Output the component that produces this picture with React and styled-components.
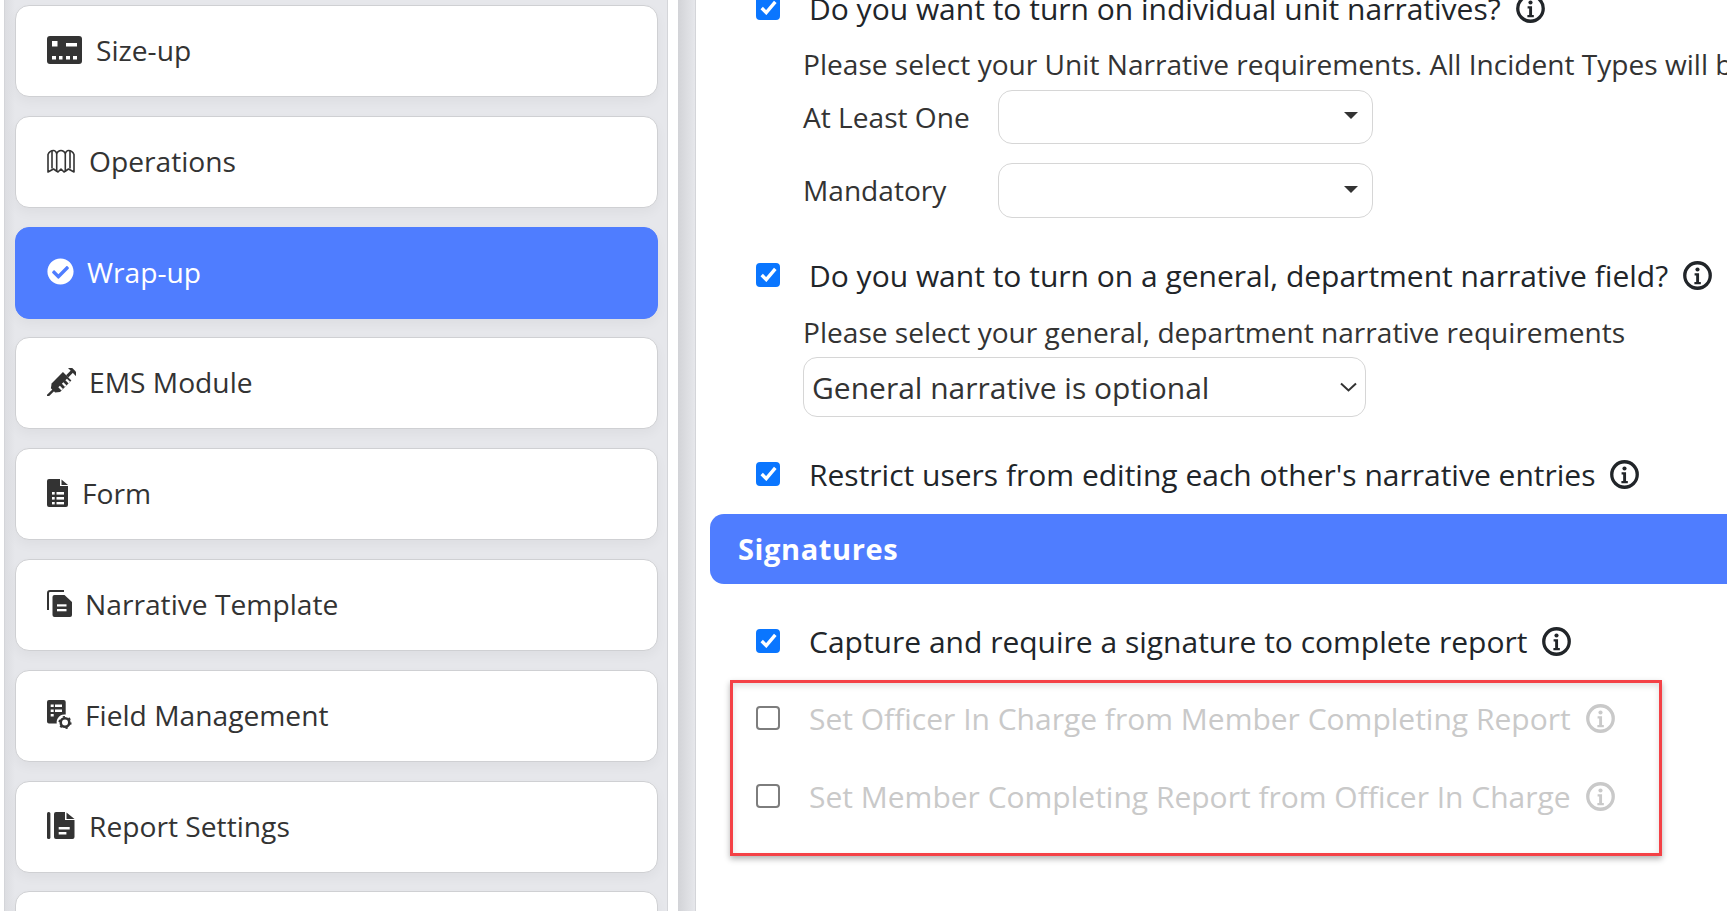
import React from "react";
import styled, { createGlobalStyle } from "styled-components";
import { FaCheckCircle } from "react-icons/fa";

const Global = createGlobalStyle`
  html, body { margin: 0; padding: 0; background: #fff; overflow: hidden; }
  body { font-family: "Open Sans", "Liberation Sans", sans-serif; color: #333; }
`;

const Page = styled.div`
  display: flex;
  width: 1727px;
  height: 911px;
  overflow: hidden;
  background: #fff;
  padding-left: 4px;
  box-sizing: border-box;
`;

const SidePanel = styled.aside`
  flex: 0 0 664px;
  box-sizing: border-box;
  border-left: 1px solid #d4d5d9;
  border-right: 1px solid #d4d5d9;
  background: linear-gradient(90deg, #dcdde1 0, #e6e7eb 10px);
  padding: 5px 9px 0 10px;
  display: flex;
  flex-direction: column;
  gap: 18.8px;
  overflow: hidden;
`;

const NavCard = styled.div`
  flex: 0 0 92px;
  box-sizing: border-box;
  display: flex;
  align-items: center;
  gap: ${(p) => p.$gap}px;
  padding: 0 0 2px 31px;
  border-radius: 14px;
  font-size: 28.2px;
  background: ${(p) => (p.$active ? "#4f7dff" : "#fff")};
  color: ${(p) => (p.$active ? "#fff" : "#333")};
  border: 1px solid ${(p) => (p.$active ? "#4f7dff" : "#cfd0d3")};
  box-shadow: 0 5px 12px rgba(0, 0, 0, 0.04);
  svg { flex: none; display: block; }
`;

const Gutter = styled.div`
  flex: 0 0 18px;
  margin-left: 10px;
  box-sizing: border-box;
  border-right: 1px solid #d4d5d9;
  background: linear-gradient(90deg, #d2d3d7 0, #e6e7eb 100%);
`;

const Main = styled.main`
  flex: 1;
  min-width: 0;
  overflow: hidden;
  padding-left: 14px;
`;

const Content = styled.div`
  margin-top: -14px;
  width: 1100px;
`;

const Row = styled.div`
  display: flex;
  align-items: center;
  height: 44px;
  margin-top: ${(p) => p.$top || 0}px;
  padding-left: 46px;
  font-size: 30px;
  color: ${(p) => (p.$off ? "#c9c9c9" : "#212529")};
  white-space: nowrap;
`;

const Check = styled.span`
  flex: none;
  box-sizing: border-box;
  width: 24px;
  height: 24px;
  border-radius: 4px;
  margin: 0 29px 1px 0;
  display: flex;
  align-items: center;
  justify-content: center;
  background: ${(p) => (p.$on ? "#0a76ff" : "#fff")};
  border: 2px solid ${(p) => (p.$on ? "#0a76ff" : "#7d7d7d")};
`;

const InfoWrap = styled.span`
  display: flex;
  margin-left: 15px;
`;

const SubLabel = styled.div`
  margin: ${(p) => p.$top}px 0 0 93px;
  font-size: 28.1px;
  line-height: 40px;
  color: #333;
  white-space: nowrap;
`;

const FieldRow = styled.div`
  display: flex;
  align-items: center;
  margin: ${(p) => p.$top}px 0 0 93px;
  font-size: 28.1px;
  color: #333;
`;

const FieldName = styled.span`
  flex: 0 0 195px;
  padding-bottom: ${(p) => p.$lift || 0}px;
`;

const Combo = styled.div`
  box-sizing: border-box;
  width: 375px;
  height: ${(p) => p.$h}px;
  border: 1px solid #d6d6d6;
  border-radius: 14px;
  display: flex;
  align-items: center;
  justify-content: flex-end;
  padding-right: 14px;
`;

const Caret = styled.span`
  width: 0;
  height: 0;
  border-left: 7px solid transparent;
  border-right: 7px solid transparent;
  border-top: 7px solid #333;
  margin-bottom: 3px;
`;

const NativeSelect = styled.div`
  box-sizing: border-box;
  width: 563px;
  height: 60px;
  margin: 5px 0 0 93px;
  border: 1px solid #d6d6d6;
  border-radius: 14px;
  padding: 0 8px 0 8px;
  display: flex;
  align-items: center;
  justify-content: space-between;
  font-size: 30px;
  color: #333;
`;

const SectionBar = styled.div`
  box-sizing: border-box;
  height: 70px;
  margin-top: 18px;
  padding: 0 0 2px 28px;
  border-radius: 14px 0 0 14px;
  background: #4f7dff;
  color: #fff;
  font-weight: 700;
  font-size: 29px;
  letter-spacing: 0.6px;
  display: flex;
  align-items: center;
`;

const Highlight = styled.div`
  box-sizing: border-box;
  width: 932px;
  height: 176px;
  margin: 17px 0 0 20px;
  padding-top: 13px;
  border: 3px solid #f44146;
  box-shadow: 0 3px 6px rgba(0, 0, 0, 0.3), inset 0 3px 6px rgba(0, 0, 0, 0.12);
`;

const HRow = styled(Row)`
  padding-left: 23px;
`;

const Info = ({ c = "#212529" }) => (
  <svg width="29" height="29" viewBox="0 0 28 28">
    <circle cx="14" cy="14" r="12.3" fill="none" stroke={c} strokeWidth="3.2" />
    <circle cx="14" cy="8.2" r="2" fill={c} />
    <path d="M11.2 11.800h4.300v8.400h1.700v2.200h-6.200v-2.200h1.700v-6.200h-1.500z" fill={c} />
  </svg>
);

const Tick = () => (
  <svg width="17" height="15" viewBox="0 0 15 13">
    <path d="M1.5 7l4 4 8-9.500" fill="none" stroke="#fff" strokeWidth="3" />
  </svg>
);

const Chevron = () => (
  <svg width="17" height="10" viewBox="0 0 17 10">
    <path d="M1 1.500l7.500 7 7.500-7" fill="none" stroke="#333" strokeWidth="2" />
  </svg>
);

const IconSize = () => (
  <svg width="35" height="28" viewBox="0 0 35 28">
    <rect width="35" height="28" rx="3" fill="#333" />
    <g fill="#fff">
      <rect x="5" y="5" width="5.500" height="5.500" />
      <rect x="19" y="7" width="11" height="3.500" />
      <rect x="5" y="20" width="4" height="3.500" />
      <rect x="12" y="20" width="3.500" height="3.500" />
      <rect x="19" y="20" width="4" height="3.500" />
      <rect x="26" y="20" width="4" height="3.500" />
    </g>
  </svg>
);

const IconMap = () => (
  <svg width="28" height="26" viewBox="0 0 28 24" fill="none" stroke="#333" strokeWidth="1.600" strokeLinejoin="round">
    <path d="M1 5.500C2 3 4 1.500 6.500 1.500c1.500 0 2.500 1 3.200 3 .8-2 2-3 4.300-3s3.500 1 4.300 3c.7-2 1.700-3 3.200-3 2.500 0 4.500 1.500 5.500 4V23l-5.500-3-4.500 3-3-3-3 3-4.500-3L1 23z" />
    <path d="M9.700 4.500V23M18.300 4.500V23M5 2v17.500M23 2v17.500" />
  </svg>
);

const IconSyringe = () => (
  <svg width="29" height="28" viewBox="0 0 28 28">
    <g transform="rotate(-45 14 14)">
      <rect x="-6" y="12.800" width="9" height="2.400" fill="#333" />
      <path d="M2 11l4-3h16v12H6l-4-3z" fill="#333" />
      <rect x="22" y="12.500" width="7" height="3" fill="#333" />
      <rect x="28.500" y="7.500" width="3" height="13" rx="1" fill="#333" />
      <rect x="8" y="15.500" width="2.200" height="4.500" fill="#fff" />
      <rect x="13" y="15.500" width="2.200" height="4.500" fill="#fff" />
      <rect x="18" y="15.500" width="2.200" height="4.500" fill="#fff" />
    </g>
  </svg>
);

const IconForm = () => (
  <svg width="21" height="28" viewBox="0 0 21 28">
    <path d="M2 0h11v7h8v19a2 2 0 0 1-2 2H2a2 2 0 0 1-2-2V2a2 2 0 0 1 2-2z" fill="#333" />
    <path d="M14.500 0.500l6.500 5.500h-6.500z" fill="#333" />
    <g fill="#fff">
      <rect x="5" y="13" width="2.700" height="2.600" />
      <rect x="9.500" y="13" width="7.500" height="2.600" />
      <rect x="5" y="18" width="2.700" height="2.600" />
      <rect x="9.500" y="18" width="7.500" height="2.600" />
      <rect x="5" y="23" width="2.700" height="2.400" />
      <rect x="9.500" y="23" width="7.500" height="2.400" />
    </g>
  </svg>
);

const IconNarrative = () => (
  <svg width="25" height="27" viewBox="0 0 25 27">
    <path d="M1 20V3a2 2 0 0 1 2-2h14" fill="none" stroke="#333" strokeWidth="2" />
    <path d="M7.500 5h10l7.500 7v13a2 2 0 0 1-2 2H7.500a2 2 0 0 1-2-2V7a2 2 0 0 1 2-2z" fill="#333" />
    <rect x="10" y="14.300" width="9.500" height="2.200" fill="#fff" />
    <rect x="10" y="19" width="9.500" height="2.300" fill="#fff" />
  </svg>
);

const IconField = () => (
  <svg width="25" height="29" viewBox="0 0 25 29">
    <path d="M2 0h14.700a2 2 0 0 1 2 2v12.500a8 8 0 0 0-9 9H2a2 2 0 0 1-2-2V2a2 2 0 0 1 2-2z" fill="#333" />
    <g fill="#fff">
      <rect x="3.700" y="4.500" width="3" height="2.500" />
      <rect x="8" y="4.500" width="7" height="2.500" />
      <rect x="3.700" y="9.500" width="3" height="2.500" />
      <rect x="8" y="9.500" width="7" height="2.500" />
      <rect x="3.700" y="14" width="3" height="2.500" />
    </g>
    <circle cx="18" cy="22.500" r="4.300" fill="none" stroke="#333" strokeWidth="2.600" />
    <circle cx="18" cy="22.500" r="5.800" fill="none" stroke="#333" strokeWidth="1.600" strokeDasharray="2.200 3.900" />
  </svg>
);

const IconReport = () => (
  <svg width="28" height="27" viewBox="0 0 28 27">
    <rect x="0" y="0" width="3.400" height="27" rx="1.500" fill="#333" />
    <path d="M9 0h9v8h9.500v17a2 2 0 0 1-2 2H9a2 2 0 0 1-2-2V2a2 2 0 0 1 2-2z" fill="#333" />
    <path d="M19.500 0.500l8 6.500h-8z" fill="#333" />
    <rect x="11.700" y="15" width="11" height="2.500" fill="#fff" />
    <rect x="11.700" y="20" width="7.700" height="2.500" fill="#fff" />
  </svg>
);

const nav = [
  { label: "Size-up", icon: <IconSize />, gap: 14 },
  { label: "Operations", icon: <IconMap />, gap: 14 },
  { label: "Wrap-up", icon: <FaCheckCircle size={27} color="#fff" />, gap: 13, active: true },
  { label: "EMS Module", icon: <IconSyringe />, gap: 13 },
  { label: "Form", icon: <IconForm />, gap: 14 },
  { label: "Narrative Template", icon: <IconNarrative />, gap: 13 },
  { label: "Field Management", icon: <IconField />, gap: 13 },
  { label: "Report Settings", icon: <IconReport />, gap: 14 },
  { label: "", icon: null, gap: 0 },
];

export default function App() {
  return (
    <Page>
      <Global />
      <SidePanel>
        {nav.map((n, i) => (
          <NavCard key={i} $active={n.active} $gap={n.gap}>
            {n.icon}
            {n.label && <span>{n.label}</span>}
          </NavCard>
        ))}
      </SidePanel>
      <Gutter />
      <Main>
        <Content>
          <Row>
            <Check $on><Tick /></Check>
            Do you want to turn on individual unit narratives?
            <InfoWrap><Info /></InfoWrap>
          </Row>
          <SubLabel $top={14}>Please select your Unit Narrative requirements. All Incident Types will be</SubLabel>
          <FieldRow $top={6}>
            <FieldName>At Least One</FieldName>
            <Combo $h={54}><Caret /></Combo>
          </FieldRow>
          <FieldRow $top={19}>
            <FieldName $lift={2}>Mandatory</FieldName>
            <Combo $h={55}><Caret /></Combo>
          </FieldRow>
          <Row $top={35}>
            <Check $on><Tick /></Check>
            Do you want to turn on a general, department narrative field?
            <InfoWrap><Info /></InfoWrap>
          </Row>
          <SubLabel $top={15}>Please select your general, department narrative requirements</SubLabel>
          <NativeSelect>
            General narrative is optional
            <Chevron />
          </NativeSelect>
          <Row $top={35}>
            <Check $on><Tick /></Check>
            Restrict users from editing each other's narrative entries
            <InfoWrap><Info /></InfoWrap>
          </Row>
          <SectionBar>Signatures</SectionBar>
          <Row $top={35}>
            <Check $on><Tick /></Check>
            Capture and require a signature to complete report
            <InfoWrap><Info /></InfoWrap>
          </Row>
          <Highlight>
            <HRow $off>
              <Check />
              Set Officer In Charge from Member Completing Report
              <InfoWrap><Info c="#c9c9c9" /></InfoWrap>
            </HRow>
            <HRow $off $top={34}>
              <Check />
              Set Member Completing Report from Officer In Charge
              <InfoWrap><Info c="#c9c9c9" /></InfoWrap>
            </HRow>
          </Highlight>
        </Content>
      </Main>
    </Page>
  );
}
